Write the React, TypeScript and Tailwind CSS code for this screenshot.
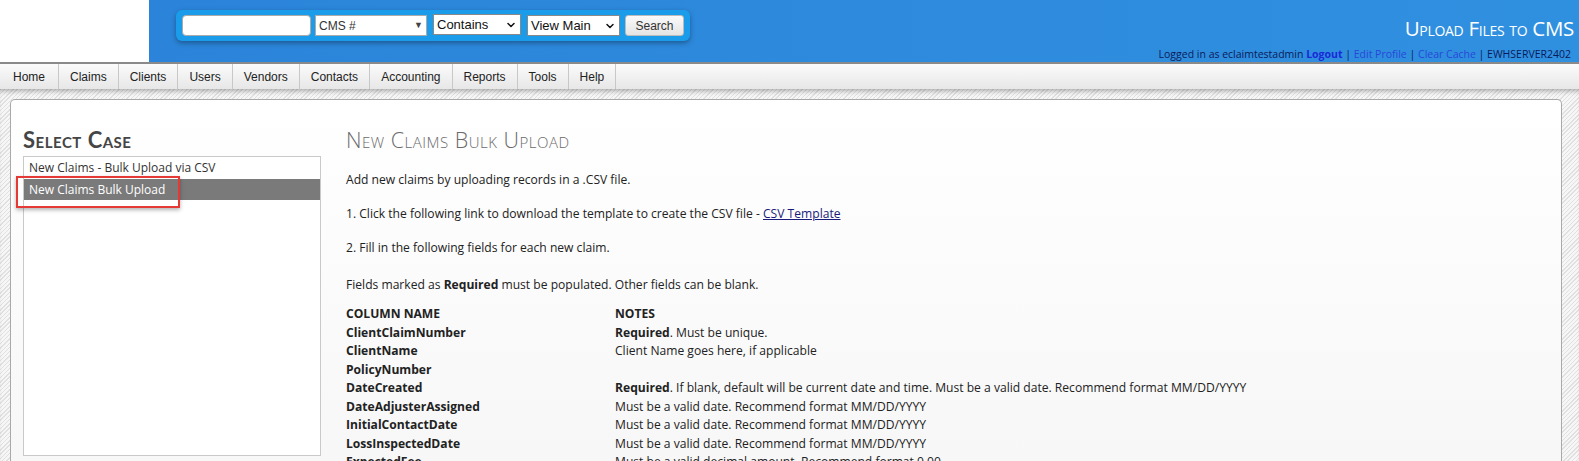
import { ChevronDown } from "lucide-react";

const navItems = ["Home", "Claims", "Clients", "Users", "Vendors", "Contacts", "Accounting", "Reports", "Tools", "Help"];

const rows: { name: string; note: React.ReactNode }[] = [
    { name: "ClientClaimNumber", note: <><b className="font-bold">Required</b>. Must be unique.</> },
    { name: "ClientName", note: "Client Name goes here, if applicable" },
    { name: "PolicyNumber", note: "" },
    {
        name: "DateCreated",
        note: <><b className="font-bold">Required</b>. If blank, default will be current date and time. Must be a valid date. Recommend format MM/DD/YYYY</>,
    },
    { name: "DateAdjusterAssigned", note: "Must be a valid date. Recommend format MM/DD/YYYY" },
    { name: "InitialContactDate", note: "Must be a valid date. Recommend format MM/DD/YYYY" },
    { name: "LossInspectedDate", note: "Must be a valid date. Recommend format MM/DD/YYYY" },
    { name: "ExpectedFee", note: "Must be a valid decimal amount. Recommend format 0.00" },
];

export default function App() {
    return (
        <div className="w-[1579px] h-[461px] overflow-hidden bg-white font-['Open_Sans',sans-serif] text-[#222]">
            {/* Header */}
            <div className="flex h-[64px] border-b-2 border-[#8a8a8a]">
                <div className="w-[149px] bg-white" />
                <div className="flex-1 flex justify-between bg-gradient-to-r from-[#2b84d9] to-[#3090e0]">
                    <div className="pl-[27px] pt-[10px]">
                        <div className="flex items-center gap-[4px] h-[31px] px-[6px] rounded-[6px] bg-[#1b9ceb] shadow-[0_2px_5px_rgba(0,0,0,0.35)] font-['Liberation_Sans',sans-serif] text-[13px]">
                            <div className="w-[129px] h-[21px] rounded-[4px] bg-white border border-[#aaa]" />
                            <div className="w-[112px] h-[21px] bg-white border border-[#aaa] flex items-center justify-between px-[3px] text-[12px] text-[#333]">
                                <span>CMS #</span>
                                <span className="text-[9px] text-[#444]">▼</span>
                            </div>
                            <div className="ml-[2px] w-[88px] h-[21px] -mt-[2px] bg-white border border-[#888] flex items-center justify-between px-[3px] text-[#111]">
                                <span>Contains</span>
                                <ChevronDown size={12} strokeWidth={3} />
                            </div>
                            <div className="ml-[2px] w-[93px] h-[21px] bg-white border border-[#888] flex items-center justify-between px-[3px] text-[#111]">
                                <span>View Main</span>
                                <ChevronDown size={12} strokeWidth={3} />
                            </div>
                            <div className="ml-[1px] w-[59px] h-[21px] rounded-[3px] border border-[#bbb] bg-gradient-to-b from-[#fafafa] to-[#e4e4e4] flex items-center justify-center text-[12px] text-[#333]">
                                Search
                            </div>
                        </div>
                    </div>
                    <div className="flex flex-col items-end pr-[5px] pt-[15px]">
                        <div className="text-white text-[20.5px] leading-[26px] [font-variant:small-caps] tracking-[-0.3px]">
                            Upload Files to CMS
                        </div>
                        <div className="mt-[6px] mr-[3px] text-[10.5px] leading-[14px] text-[#0b1b5a]">
                            Logged in as eclaimtestadmin <span className="font-bold text-[#1a29d8]">Logout</span>{" "}
                            | <span className="text-[#2747d9]">Edit Profile</span> |{" "}
                            <span className="text-[#2747d9]">Clear Cache</span> | EWHSERVER2402
                        </div>
                    </div>
                </div>
            </div>

            {/* Nav */}
            <div className="flex h-[25px] bg-gradient-to-b from-[#fbfbfb] to-[#e7e7e7] text-[12px] font-['Liberation_Sans',sans-serif] text-[#222]">
                {navItems.map((n) => (
                    <div key={n} className="px-[11px] first:px-[13px] flex items-center border-r border-[#c8c8c8]">
                        {n}
                    </div>
                ))}
            </div>

            {/* Main */}
            <div className="h-[372px] pl-[10px] pt-[10px] shadow-[inset_0_5px_5px_-3px_rgba(0,0,0,0.3)] bg-[repeating-linear-gradient(135deg,#e0e0e0_0px,#e0e0e0_1px,#f6f6f6_1px,#f6f6f6_3px)]">
                <div className="w-[1552px] h-full flex rounded-t-[5px] border-l border-t border-r border-[#a9a9a9] bg-gradient-to-b from-white to-[#f7f7f7]">
                    {/* Select case */}
                    <div className="w-[310px] pl-[12px] pt-[27px]">
                        <div className="text-[22px] leading-[26px] font-bold text-[#454545] [font-variant:small-caps] font-['Lato',sans-serif] tracking-[0.5px]">
                            Select Case
                        </div>
                        <div className="relative mt-[3px] w-[298px] h-[300px] border border-[#c9c9c9] bg-white text-[12px] font-['Open_Sans',sans-serif]">
                            <div className="h-[22px] pl-[5px] flex items-center text-[#333]">New Claims - Bulk Upload via CSV</div>
                            <div className="h-[21px] pl-[5px] flex items-center bg-[#7a7a7a] text-white">New Claims Bulk Upload</div>
                            <div className="absolute left-[-8px] top-[19px] w-[164px] h-[32px] border-2 border-[#e53935] shadow-[0_2px_4px_rgba(0,0,0,0.3)]" />
                        </div>
                    </div>

                    {/* Content */}
                    <div className="flex-1 pl-[25px] pt-[27px] text-[12.1px]">
                        <div className="text-[21.5px] leading-[26px] font-light text-[#6a6a6a] [font-variant:small-caps] tracking-[0.5px]">
                            New Claims Bulk Upload
                        </div>
                        <p className="mt-[18px] leading-[17px]">Add new claims by uploading records in a .CSV file.</p>
                        <p className="mt-[17px] leading-[17px]">
                            1. Click the following link to download the template to create the CSV file -{" "}
                            <span className="underline text-[#1a1a7a]">CSV Template</span>
                        </p>
                        <p className="mt-[17px] leading-[17px]">2. Fill in the following fields for each new claim.</p>
                        <p className="mt-[20px] leading-[17px]">
                            Fields marked as <b className="font-bold">Required</b> must be populated. Other fields can be blank.
                        </p>
                        <div className="mt-[12px] grid grid-cols-[269px_1fr] leading-[18.5px]">
                            <div className="font-bold">COLUMN NAME</div>
                            <div className="font-bold">NOTES</div>
                            {rows.map((r) => (
                                <div key={r.name} className="contents">
                                    <div className="font-bold">{r.name}</div>
                                    <div>{r.note}</div>
                                </div>
                            ))}
                        </div>
                    </div>
                </div>
            </div>
        </div>
    );
}
